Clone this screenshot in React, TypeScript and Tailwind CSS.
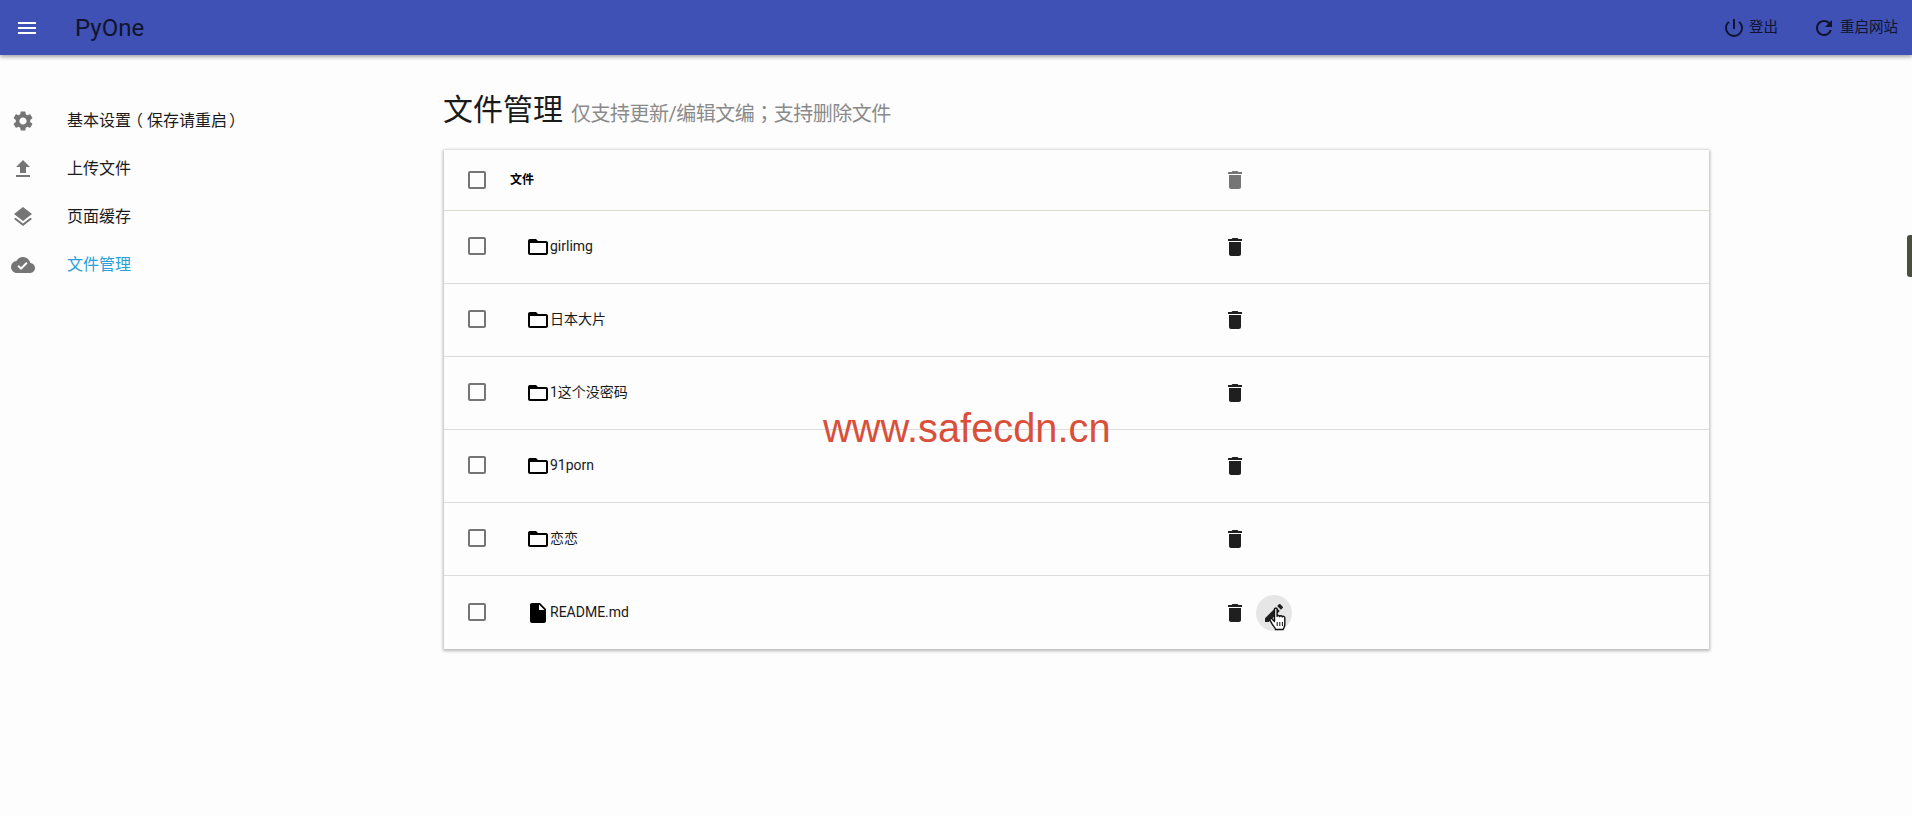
import React from "react";
import {
  MdMenu, MdSettings, MdFileUpload, MdLayers, MdCloudDone, MdDelete, MdEdit,
  MdFolderOpen, MdInsertDriveFile, MdPowerSettingsNew, MdRefresh,
} from "react-icons/md";

const FONT = "font-['Roboto','Noto_Sans_CJK_SC',sans-serif]";

const nav = [
  {
    icon: MdSettings,
    label: (
      <>
        基本设置<span className="inline-block px-[4px] [font-feature-settings:'halt']">（</span>保存请重启<span className="inline-block pl-[2px] [font-feature-settings:'halt']">）</span>
      </>
    ),
    key: "a",
    active: false,
  },
  { icon: MdFileUpload, label: "上传文件", key: "b", active: false },
  { icon: MdLayers, label: "页面缓存", key: "c", active: false },
  { icon: MdCloudDone, label: "文件管理", key: "d", active: true },
];

const rows = [
  { name: "girlimg", file: false },
  { name: "日本大片", file: false },
  { name: "1这个没密码", file: false },
  { name: "91porn", file: false },
  { name: "恋恋", file: false },
  { name: "README.md", file: true },
];

function Check() {
  return <span className="block w-[18px] h-[18px] border-2 border-[#757575] rounded-[2px]" />;
}

function Hand() {
  return (
    <svg width="22" height="26" viewBox="0 0 22 26" className="absolute left-[12px] top-[12px]">
      <path
        d="M6.5 2.2c0-1.5 2.6-1.5 2.6 0v7.2c.4-1.3 2.5-1.2 2.6.2.3-1.2 2.4-1.2 2.6.3.5-1 2.4-.8 2.5.7v6.6c0 2.4-1 3.5-1.6 5.3H7.6c-.6-2-2.2-3.2-3.4-5.3L2 13.2c-.7-1.4 1.1-2.5 2.2-1.2l2.3 2.6z"
        fill="#fff"
        stroke="#111"
        strokeWidth="1.4"
        strokeLinejoin="round"
      />
      <path d="M9.2 15v4M11.8 15v4M14.4 15v4" stroke="#111" strokeWidth="1" />
    </svg>
  );
}

export default function App() {
  return (
    <div className={`${FONT} relative h-[816px] overflow-hidden bg-[#fdfdfd] text-[#1a1a1a]`}>
      <header className="relative z-10 h-[55px] bg-[#3f51b5] shadow-[0_2px_4px_rgba(0,0,0,0.35)] flex items-center text-[#10142c]">
        <MdMenu className="ml-[15px] text-white" size={24} />
        <span className="ml-[36px] text-[24px] leading-none">PyOne</span>
        <div className="ml-auto flex items-center text-[14.5px]">
          <MdPowerSettingsNew size={24} className="mr-[3px]" />
          <span>登出</span>
          <MdRefresh size={24} className="ml-[34px] mr-[4px]" />
          <span className="mr-[14px]">重启网站</span>
        </div>
      </header>

      <div className="flex">
        <nav className="w-[444px] shrink-0 pt-[42px]">
          {nav.map((n) => (
            <div key={n.key} className="h-[48px] flex items-center pl-[11px]">
              <n.icon size={24} className="text-[#757575] w-[24px]" />
              <span className={`ml-[32px] whitespace-nowrap text-[16px] ${n.active ? "text-[#2a9fd8]" : "text-[#1a1a1a]"}`}>
                {n.label}
              </span>
            </div>
          ))}
        </nav>

        <main className="w-[1265px]">
          <h1 className="h-[40px] mt-[35px] mb-[20px] ml-[-1px] flex items-baseline text-[30px] leading-[40px] font-normal text-[#1a1a1a]">
            文件管理
            <small className="ml-[8px] translate-y-[1px] text-[20px] text-[#8a8a8a] tracking-[-0.5px]">
              仅支持更新/编辑文编<span className="font-['Noto_Sans_CJK_TC']">；</span>支持删除文件
            </small>
          </h1>

          <section className="bg-[#fdfdfd] shadow-[0_1px_3px_1px_rgba(0,0,0,0.28)]">
            <div className="h-[61px] flex items-center border-b border-[#dcdcd0]">
              <div className="w-[66px] pl-[24px]"><Check /></div>
              <div className="w-[713px] text-[12px] font-bold text-black">文件</div>
              <MdDelete size={24} className="text-[#757575]" />
            </div>
            {rows.map((r, i) => (
              <div key={r.name} className={`h-[73px] flex items-center ${i < rows.length - 1 ? "border-b border-[#dcdcdc]" : ""}`}>
                <div className="w-[66px] pl-[24px] pb-[2px]"><Check /></div>
                <div className="w-[713px] pl-[16px] flex items-center text-[14px]">
                  {r.file ? (
                    <MdInsertDriveFile size={24} className="text-black shrink-0" />
                  ) : (
                    <MdFolderOpen size={24} className="text-black shrink-0" />
                  )}
                  <span className="pb-[1px]">{r.name}</span>
                </div>
                <MdDelete size={24} className="text-[#1f1f1f]" />
                {r.file && (
                  <div className="relative ml-[9px] w-[36px] h-[36px] rounded-full bg-[#e6e6e6] flex items-center justify-center">
                    <MdEdit size={24} className="text-[#1f1f1f]" />
                    <Hand />
                  </div>
                )}
              </div>
            ))}
          </section>
        </main>
      </div>

      <div className="absolute left-[823px] top-[404px] text-[39.8px] leading-[48px] text-[#d9503a] font-['Liberation_Sans',sans-serif]">
        www.safecdn.cn
      </div>
      <div className="absolute right-0 top-[235px] w-[5px] h-[42px] rounded-l-[3px] bg-[#4a4f3c]" />
    </div>
  );
}
